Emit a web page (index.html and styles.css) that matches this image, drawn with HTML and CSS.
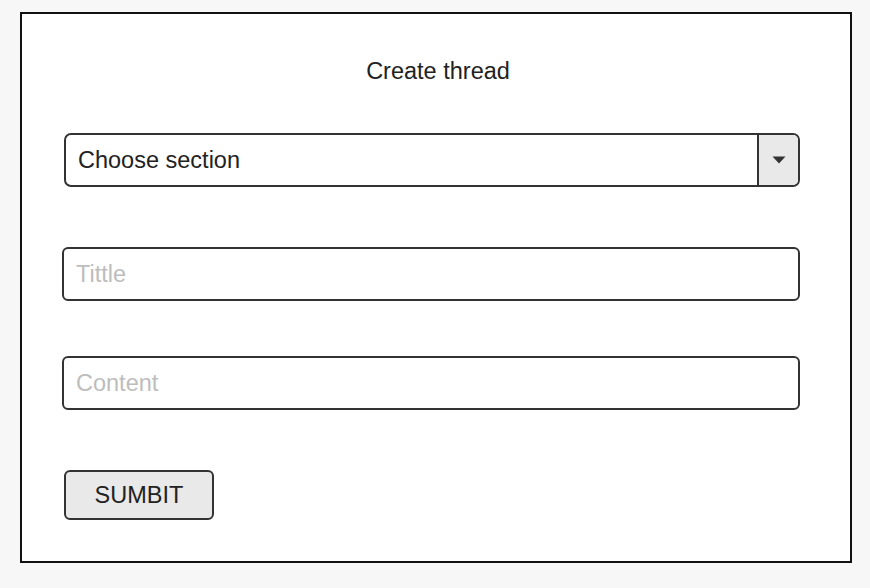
FILE: index.html
```html
<!DOCTYPE html>
<html lang="en">
<head>
<meta charset="utf-8">
<title>Create thread</title>
<link rel="stylesheet" href="styles.css">
</head>
<body>
<form class="card">
  <h1 class="title">Create thread</h1>
  <div class="select">
    <span class="select-text">Choose section</span>
    <span class="select-btn">
      <svg width="14" height="8" viewBox="0 0 14 8"><path d="M0.5 0.5 H13.5 L7 7.5 Z" fill="#333"/></svg>
    </span>
  </div>
  <input class="field field-title" type="text" placeholder="Tittle">
  <input class="field field-content" type="text" placeholder="Content">
  <button class="submit" type="button">SUMBIT</button>
</form>
</body>
</html>
```
FILE: styles.css
```css
* { box-sizing: border-box; }
html, body { margin: 0; padding: 0; }
body {
  background: #f7f7f7;
  font-family: "Liberation Sans", Arial, sans-serif;
  color: #222;
  width: 870px;
  height: 588px;
  overflow: hidden;
}
.card {
  margin: 12px 0 0 20px;
  width: 832px;
  height: 551px;
  background: #fff;
  border: 2px solid #111;
  display: flex;
  flex-direction: column;
  align-items: flex-start;
  padding: 0 0 0 40px;
}
.title {
  margin: 44px -4px 0 -40px;
  align-self: stretch;
  text-align: center;
  font-weight: normal;
  font-size: 23.5px;
  line-height: 26px;
  height: 26px;
}
.select {
  margin: 49px 0 0 2px;
  width: 736px;
  height: 54px;
  border: 2px solid #333;
  border-radius: 7px;
  display: flex;
  align-items: stretch;
  overflow: hidden;
}
.select-text {
  flex: 1;
  display: flex;
  align-items: center;
  padding-left: 12px;
  font-size: 23.5px;
  color: #222;
}
.select-btn {
  width: 41px;
  background: #e9e9e9;
  border-left: 2px solid #333;
  display: flex;
  align-items: center;
  justify-content: center;
}
.field {
  width: 738px;
  height: 54px;
  border: 2px solid #333;
  border-radius: 6px;
  padding: 0 12px;
  font-family: "Liberation Sans", Arial, sans-serif;
  font-size: 23.5px;
  color: #222;
  background: #fff;
  outline: none;
}
.field::placeholder { color: #bdbdbd; }
.field-title { margin-top: 60px; }
.field-content { margin-top: 55px; }
.submit {
  margin: 60px 0 0 2px;
  width: 150px;
  height: 50px;
  background: #e9e9e9;
  border: 2px solid #333;
  border-radius: 6px;
  font-family: "Liberation Sans", Arial, sans-serif;
  font-size: 23.5px;
  color: #222;
  padding: 0;
}
```
